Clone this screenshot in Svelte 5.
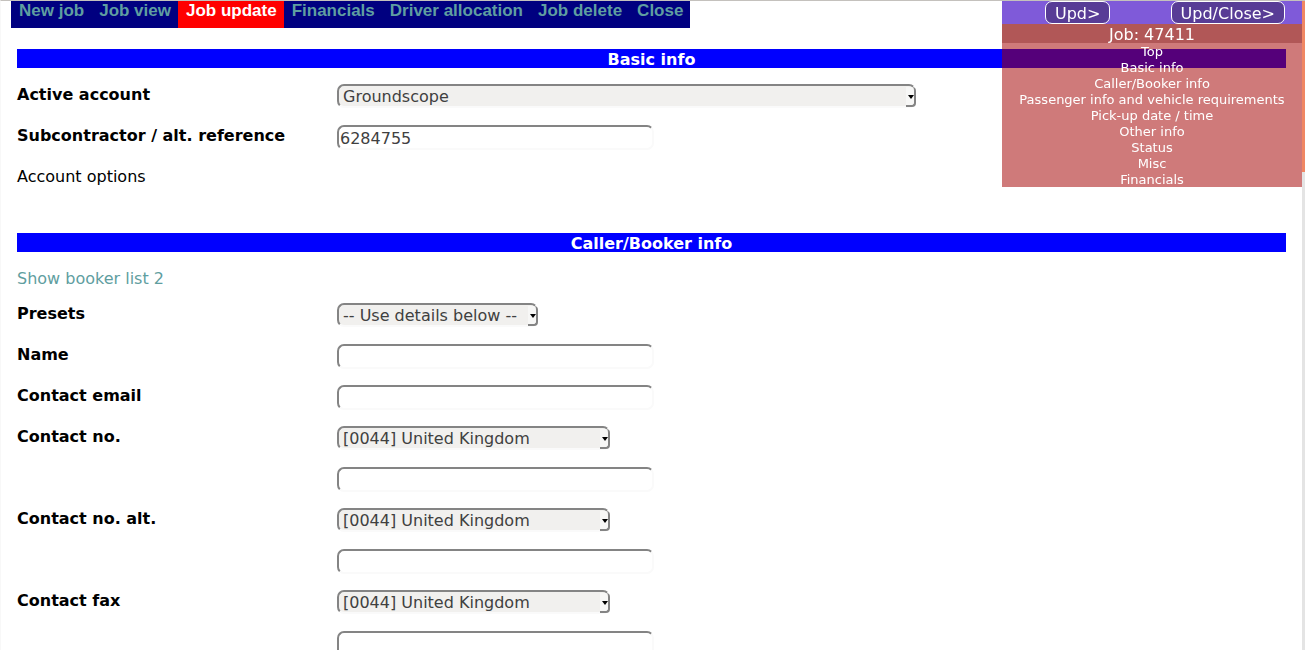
<script>
  const tabs = ['New job', 'Job view', 'Job update', 'Financials', 'Driver allocation', 'Job delete', 'Close'];
  const current = 'Job update';
  const sections = [
    'Top', 'Basic info', 'Caller/Booker info', 'Passenger info and vehicle requirements',
    'Pick-up date / time', 'Other info', 'Status', 'Misc', 'Financials'
  ];
  const phones = [
    { id: 'phone', label: 'Contact no.' },
    { id: 'phone-alt', label: 'Contact no. alt.' },
    { id: 'fax', label: 'Contact fax' }
  ];
</script>

<div class="page" id="top">
  <nav class="tabs">
    {#each tabs as tab}
      <a href="#top" class:current={tab === current}>{tab}</a>
    {/each}
  </nav>

  <main>
    <section class="basic">
      <h2>Basic info</h2>
      <div class="row">
        <label for="account">Active account</label>
        <div class="pick account"><select id="account"><option>Groundscope</option></select></div>
      </div>
      <div class="row">
        <label for="reference">Subcontractor / alt. reference</label>
        <input id="reference" type="text" value="6284755" />
      </div>
      <div class="row"><span>Account options</span></div>
    </section>

    <section>
      <h2>Caller/Booker info</h2>
      <a class="list" href="#top">Show booker list 2</a>
      <div class="row">
        <label for="presets">Presets</label>
        <div class="pick presets"><select id="presets"><option>-- Use details below --</option></select></div>
      </div>
      <div class="row">
        <label for="name">Name</label>
        <input id="name" type="text" />
      </div>
      <div class="row">
        <label for="email">Contact email</label>
        <input id="email" type="email" />
      </div>
      {#each phones as phone}
        <div class="row">
          <label id="{phone.id}-label" for="{phone.id}-country">{phone.label}</label>
          <div class="pick country">
            <select id="{phone.id}-country"><option>[0044] United Kingdom</option></select>
          </div>
        </div>
        <div class="row">
          <input class="second" type="tel" aria-labelledby="{phone.id}-label" />
        </div>
      {/each}
    </section>
  </main>
</div>

<aside>
  <div class="actions">
    <button type="button">Upd&gt;</button>
    <button type="button">Upd/Close&gt;</button>
  </div>
  <p class="job">Job: 47411</p>
  <div class="jumps">
    {#each sections as section}
      <a href="#top">{section}</a>
    {/each}
  </div>
</aside>
<div class="track"><div class="thumb"></div></div>

<style>
  :global(html) { scrollbar-width: none; }
  :global(body) {
    margin: 0;
    background: #fff;
    color: #000;
    font: 16px/21px Verdana, "DejaVu Sans", sans-serif;
  }
  .page {
    box-sizing: border-box;
    height: 100vh;
    overflow: hidden;
    border-top: 1px solid #c4c1bd;
    border-left: 1px solid #f8f8f8;
  }
  a { color: #5f9ea0; text-decoration: none; }
  .tabs {
    display: flex;
    width: max-content;
    margin-left: 10px;
    background: #000080;
    font: bold 17px/19px "Liberation Sans", Arial, sans-serif;
  }
  .tabs a { padding: 0 7px 8px 8px; }
  .tabs .current { background: #f00; color: #fff; }
  main { padding: 21px 19px 0 16px; }
  h2 {
    margin: 0 0 16px;
    padding-top: 2px;
    background: #00f;
    color: #fff;
    font-size: 16px;
    line-height: 17px;
    text-align: center;
  }
  .row {
    display: grid;
    grid-template-columns: 320px 1fr;
    align-items: start;
    height: 41px;
  }
  .row label { font-weight: bold; }
  .basic { padding-bottom: 26px; }
  .list { display: block; padding-bottom: 14px; }
  input, select {
    box-sizing: border-box;
    height: 25px;
    margin: 0;
    border: 2px solid;
    border-color: #848484 #fafafa #fafafa #848484;
    border-radius: 7px;
    background: #fff;
    color: #404040;
    font: inherit;
    outline: 0;
  }
  input { width: 317px; padding: 2px 1px 0; }
  .second { grid-column: 2; }
  .pick { position: relative; height: 24px; }
  .account { width: 579px; }
  .presets { width: 201px; }
  .country { width: 273px; }
  select {
    display: block;
    width: 100%;
    height: 24px;
    padding: 1px 10px 0 4px;
    appearance: none;
    background: #f1f0ee;
    line-height: 19px;
  }
  .pick::before {
    content: "";
    position: absolute;
    right: 0;
    top: 3px;
    bottom: 1px;
    width: 8px;
    border: solid #848484;
    border-width: 0 2px 2px 0;
    border-radius: 0 4px 4px 0;
    background: #f7f7f6;
    pointer-events: none;
  }
  .pick::after {
    content: "";
    position: absolute;
    right: 2px;
    top: 11px;
    border: 3px solid transparent;
    border-top: 4px solid #000;
    border-bottom: 0;
    pointer-events: none;
  }
  aside {
    position: fixed;
    top: 1px;
    right: 3px;
    width: 300px;
    background: rgba(163, 0, 0, 0.52);
    color: #fff;
    text-align: center;
  }
  .actions {
    display: flex;
    justify-content: space-between;
    padding: 0 17px 0 43px;
    background: #7f5ad9;
  }
  button {
    box-sizing: border-box;
    height: 23px;
    padding: 2px 9px 0;
    border: 1px solid #fff;
    border-radius: 7px;
    background: #583c96;
    color: #fff;
    font: inherit;
    line-height: 19px;
  }
  .job { margin: 0; padding-top: 2px; background: #b15757; line-height: 17px; }
  .jumps { font-size: 13px; line-height: 14px; }
  .jumps a { display: block; padding-top: 2px; color: #fff; }
  .track {
    position: fixed;
    top: 1px;
    right: 0;
    bottom: 0;
    width: 3px;
    background: #e4e4e4;
  }
  .thumb { height: 171px; background: #f08763; }
</style>
